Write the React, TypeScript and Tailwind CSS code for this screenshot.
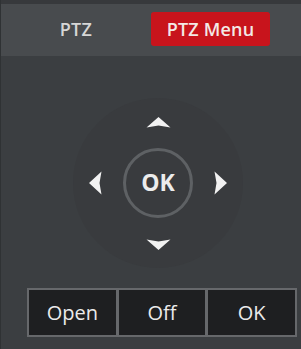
import React from "react";

const Arrow = ({ dir }: { dir: "up" | "down" | "left" | "right" }) => {
  if (dir === "up" || dir === "down") {
    return (
      <svg width="25" height="11" viewBox="0 0 25 11" className={dir === "down" ? "rotate-180" : ""}>
        <path d="M0.5 10.5 L12.5 0 L24.5 10.5 L12.5 8.5 Z" fill="#f2f2f2" />
      </svg>
    );
  }
  return (
    <svg width="13" height="24" viewBox="0 0 13 24" className={dir === "right" ? "rotate-180" : ""}>
      <path d="M12.5 0.5 L0 12 L12.5 23.5 L10.5 12 Z" fill="#f2f2f2" />
    </svg>
  );
};

export default function App() {
  const font = { fontFamily: '"Open Sans", "Noto Sans", sans-serif' };
  return (
    <div className="w-[301px] h-[349px] bg-[#3b3e41] flex flex-col border-l border-[#2f3234]" style={font}>
      <div className="h-[4px] bg-[#37393c]" />
      <div className="h-[52px] bg-[#484b4e] flex items-start pt-[8px]">
        <div className="w-[150px] h-[34px] flex items-center justify-center text-[18px] font-semibold text-[#d6d6d6] tracking-[0.3px]">
          PTZ
        </div>
        <div className="w-[119px] h-[34px] rounded-[3px] bg-[#c8141c] flex items-center justify-center text-[18px] font-semibold text-[#f3e9e6] tracking-[0.2px]">
          PTZ Menu
        </div>
      </div>
      <div className="flex flex-col pt-[42px]">
        <div className="ml-[72px] w-[170px] h-[170px] rounded-full bg-[#393b3e] flex flex-col items-center pt-[19px]">
          <Arrow dir="up" />
          <div className="mt-[20px] h-[70px] flex items-center gap-[21px]">
            <Arrow dir="left" />
            <div className="w-[70px] h-[70px] rounded-full border-[3px] border-[#5e6164] flex items-center justify-center text-[23px] font-bold text-[#ececec] leading-none pb-[1px]">
              OK
            </div>
            <Arrow dir="right" />
          </div>
          <div className="mt-[21px]">
            <Arrow dir="down" />
          </div>
        </div>
        <div className="mt-[20px] ml-[26px] w-[270px] h-[49px] flex">
          {["Open", "Off", "OK"].map((t) => (
            <div
              key={t}
              className="flex-1 border-2 border-[#66686b] bg-[#1e1f21] flex items-center justify-center text-[20px] text-[#ebebeb] -ml-[1px] first:ml-0"
            >
              {t}
            </div>
          ))}
        </div>
      </div>
    </div>
  );
}
